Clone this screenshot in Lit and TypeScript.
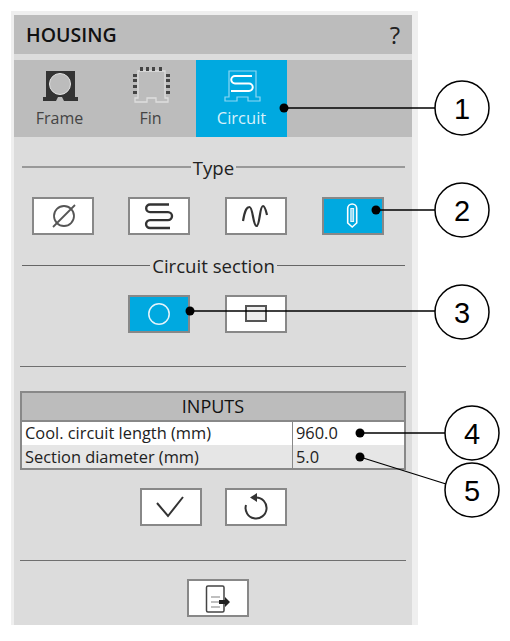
import { LitElement, html, css, svg } from "lit";
import { customElement } from "lit/decorators.js";

const ICON = {
  frame: svg`<path d="M6 7H35V33H38V37H24L22 33H18L16 37H3V33H6Z" fill="#333"/><circle cx="20" cy="20" r="10.5" fill="#bcbcbc" stroke="#e2e2e2"/>`,
  fin: svg`<path d="M7 7H34V34H37V38H25V34H16V38H4V34H7Z" fill="none" stroke="#dedede" stroke-width="1.3"/>
    <g fill="#444">
      <rect x="9" y="3" width="3" height="4"/><rect x="15" y="3" width="3" height="4"/><rect x="21" y="3" width="3" height="4"/><rect x="28" y="3" width="3" height="4"/>
      <rect x="2" y="10" width="4" height="3"/><rect x="2" y="15" width="4" height="3"/><rect x="2" y="21" width="4" height="3"/><rect x="2" y="27" width="4" height="3"/>
      <rect x="35" y="10" width="4" height="3"/><rect x="35" y="15" width="4" height="3"/><rect x="35" y="21" width="4" height="3"/><rect x="35" y="27" width="4" height="3"/>
    </g>`,
  circuit: svg`<path d="M7 7H34V33H38V37H26V33H15V37H3V33H7Z" fill="none" stroke="#8ed8f3" stroke-width="1.2"/>
    <path d="M30 12H13a3.5 3.5 0 0 0 0 7.5H27a3.7 3.7 0 0 1 0 7.5H9" fill="none" stroke="#fff" stroke-width="2"/>`,
  none: svg`<circle cx="18" cy="17" r="10" fill="none" stroke="#555" stroke-width="1.8"/><path d="M7 28 29 6" stroke="#555" stroke-width="1.8"/>`,
  serp: svg`<path d="M27 5.5H8a3.8 3.8 0 0 0 0 7.6H26a4 4 0 0 1 0 8H8a3.8 3.8 0 0 0 0 7.9H28" fill="none" stroke="#333" stroke-width="2.4"/>`,
  wave: svg`<path d="M4 22C6 10 8 8 10.5 8 14 8 14 27 17.5 27 21 27 20.5 7 24 7 26 7 27 12 28 16" fill="none" stroke="#333" stroke-width="2.2"/>`,
  pen: svg`<path d="M11.7 9.5a4.5 4.5 0 0 1 9 0V24L16.2 28 11.7 24Z" fill="none" stroke="#fff" stroke-width="1.6"/><rect x="14.8" y="9.5" width="2.8" height="13" fill="#8ed8f3" stroke="#e6f6fc"/>`,
  round: svg`<circle cx="17" cy="17" r="10.2" fill="none" stroke="#e4f4fb" stroke-width="1.5"/>`,
  rect: svg`<rect x="7" y="9" width="20" height="15" fill="#eee" stroke="#555" stroke-width="2"/>`,
  check: svg`<path d="M3 13 14 26 29 7" fill="none" stroke="#333" stroke-width="2"/>`,
  reset: svg`<path d="M17 7.5A10.5 10.5 0 1 1 7 15" fill="none" stroke="#333" stroke-width="2"/><path d="M18 3V12L11 7.5Z" fill="#333"/>`,
  exp: svg`<rect x="5.5" y="5" width="17.5" height="26" rx="1.5" fill="none" stroke="#444" stroke-width="1.5"/>
    <path d="M10 16H19M10 21H19M10 26H19" stroke="#aaa" stroke-width="1.5"/>
    <path d="M18 19H24V16L29 21 24 26V23H18Z" fill="#222"/>`,
};

const CALLOUTS = [
  { n: "1", cx: 462, cy: 108, dx: 284, dy: 108, ex: 435, ey: 108 },
  { n: "2", cx: 462, cy: 210, dx: 376, dy: 210, ex: 435, ey: 210 },
  { n: "3", cx: 462, cy: 312, dx: 190, dy: 311, ex: 435, ey: 311 },
  { n: "4", cx: 472, cy: 433, dx: 360, dy: 433, ex: 445, ey: 433 },
  { n: "5", cx: 472, cy: 490, dx: 360, dy: 457, ex: 446, ey: 484 },
];

@customElement("app-root")
export class AppRoot extends LitElement {
  static styles = css`
    :host {
      display: block;
      position: relative;
      height: 641px;
      padding: 11px 0 0 11px;
      box-sizing: border-box;
      font-family: "Open Sans", sans-serif;
      color: #333;
    }
    .panel {
      width: 407px;
      box-sizing: border-box;
      background: #dcdcdc;
      border: solid #efefef;
      border-width: 4px 6px 0 3px;
      padding-bottom: 8px;
    }
    .head {
      height: 39px;
      background: #bcbcbc;
      display: flex;
      align-items: center;
      justify-content: space-between;
      padding: 0 12px;
      margin-bottom: 6px;
    }
    .title { font-size: 19.5px; font-weight: 600; color: #111; }
    .help { font-size: 24px; color: #222; }
    .tabs { display: flex; height: 77px; background: #bcbcbc; }
    .tab {
      width: 91px;
      display: flex;
      flex-direction: column;
      align-items: center;
      padding-top: 4px;
      box-sizing: border-box;
      color: #444;
      font-size: 16px;
      line-height: 20px;
    }
    .tab.on { background: #00a9e0; color: #d8f1fb; font-size: 16.5px; }
    .tab svg { display: block; margin-bottom: 4px; }
    .legend {
      display: flex;
      align-items: center;
      gap: 2px;
      height: 22px;
      margin: 19px 7px 19px 8px;
      font-size: 18.6px;
      color: #222;
    }
    .legend i { flex: 1; height: 1px; background: #666; }
    .legend.soft i { height: 2px; background: #999; }
    .row { display: flex; gap: 34.67px; padding-left: 17.7px; }
    .row.mid { padding-left: 114px; }
    .row.act { padding-left: 126px; gap: 23px; margin-top: 18px; }
    .row.exp { padding-left: 173px; margin-top: 18px; }
    .btn {
      width: 62px;
      height: 38px;
      box-sizing: border-box;
      border: 2px solid #888;
      background: #fff;
      display: flex;
      align-items: center;
      justify-content: center;
    }
    .btn.on { background: #00a9e0; }
    .btn svg { display: block; }
    .sep { height: 1px; background: #6f6f6f; margin: 0 6px; }
    .sep.a { margin-top: 33px; }
    .sep.b { margin-top: 34px; }
    .table {
      margin: 24px 6px 0;
      border: 2px solid #888;
      height: 79px;
      box-sizing: border-box;
      font-size: 16.4px;
      color: #222;
    }
    .thead {
      height: 29px;
      box-sizing: border-box;
      background: #bcbcbc;
      border-bottom: 2px solid #888;
      text-align: center;
      font-size: 18px;
      line-height: 27px;
      color: #111;
    }
    .tr {
      height: 23px;
      display: grid;
      grid-template-columns: 270px 1fr;
      line-height: 22px;
      background: #fff;
    }
    .tr.alt { background: #e6e6e6; line-height: 24px; }
    .tr span { padding-left: 3px; }
    .tr span + span { border-left: 1.5px solid #888; }
    .overlay { position: absolute; left: 0; top: 0; pointer-events: none; }
    .overlay text { font-family: "Liberation Sans", Arial, sans-serif; font-size: 29px; text-anchor: middle; }
  `;

  private icon(name: keyof typeof ICON, size = 34) {
    return html`<svg width=${size} height=${size} viewBox="0 0 ${size} ${size}">${ICON[name]}</svg>`;
  }

  private btn(name: keyof typeof ICON, on = false) {
    return html`<div class="btn ${on ? "on" : ""}">${this.icon(name)}</div>`;
  }

  private tab(name: keyof typeof ICON, label: string, on = false) {
    return html`<div class="tab ${on ? "on" : ""}">${this.icon(name, 40)}<span>${label}</span></div>`;
  }

  render() {
    return html`
      <div class="panel">
        <div class="head"><span class="title">HOUSING</span><span class="help">?</span></div>
        <div class="tabs">
          ${this.tab("frame", "Frame")}${this.tab("fin", "Fin")}${this.tab("circuit", "Circuit", true)}
        </div>
        <div class="legend soft"><i></i><span>Type</span><i></i></div>
        <div class="row">
          ${this.btn("none")}${this.btn("serp")}${this.btn("wave")}${this.btn("pen", true)}
        </div>
        <div class="legend"><i></i><span>Circuit section</span><i></i></div>
        <div class="row mid">${this.btn("round", true)}${this.btn("rect")}</div>
        <div class="sep a"></div>
        <div class="table">
          <div class="thead">INPUTS</div>
          <div class="tr"><span>Cool. circuit length (mm)</span><span>960.0</span></div>
          <div class="tr alt"><span>Section diameter (mm)</span><span>5.0</span></div>
        </div>
        <div class="row act">${this.btn("check")}${this.btn("reset")}</div>
        <div class="sep b"></div>
        <div class="row exp">${this.btn("exp")}</div>
      </div>
      <svg class="overlay" width="510" height="641" viewBox="0 0 510 641">
        ${CALLOUTS.map(
          (c) => svg`
            <line x1=${c.dx} y1=${c.dy} x2=${c.ex} y2=${c.ey} stroke="#000" stroke-width="1.3"/>
            <circle cx=${c.dx} cy=${c.dy} r="4.5" fill="#000"/>
            <circle cx=${c.cx} cy=${c.cy} r="27" fill="#fff" stroke="#000" stroke-width="1.5"/>
            <text x=${c.cx} y=${c.cy + 11} fill="#000">${c.n}</text>`
        )}
      </svg>
    `;
  }
}
